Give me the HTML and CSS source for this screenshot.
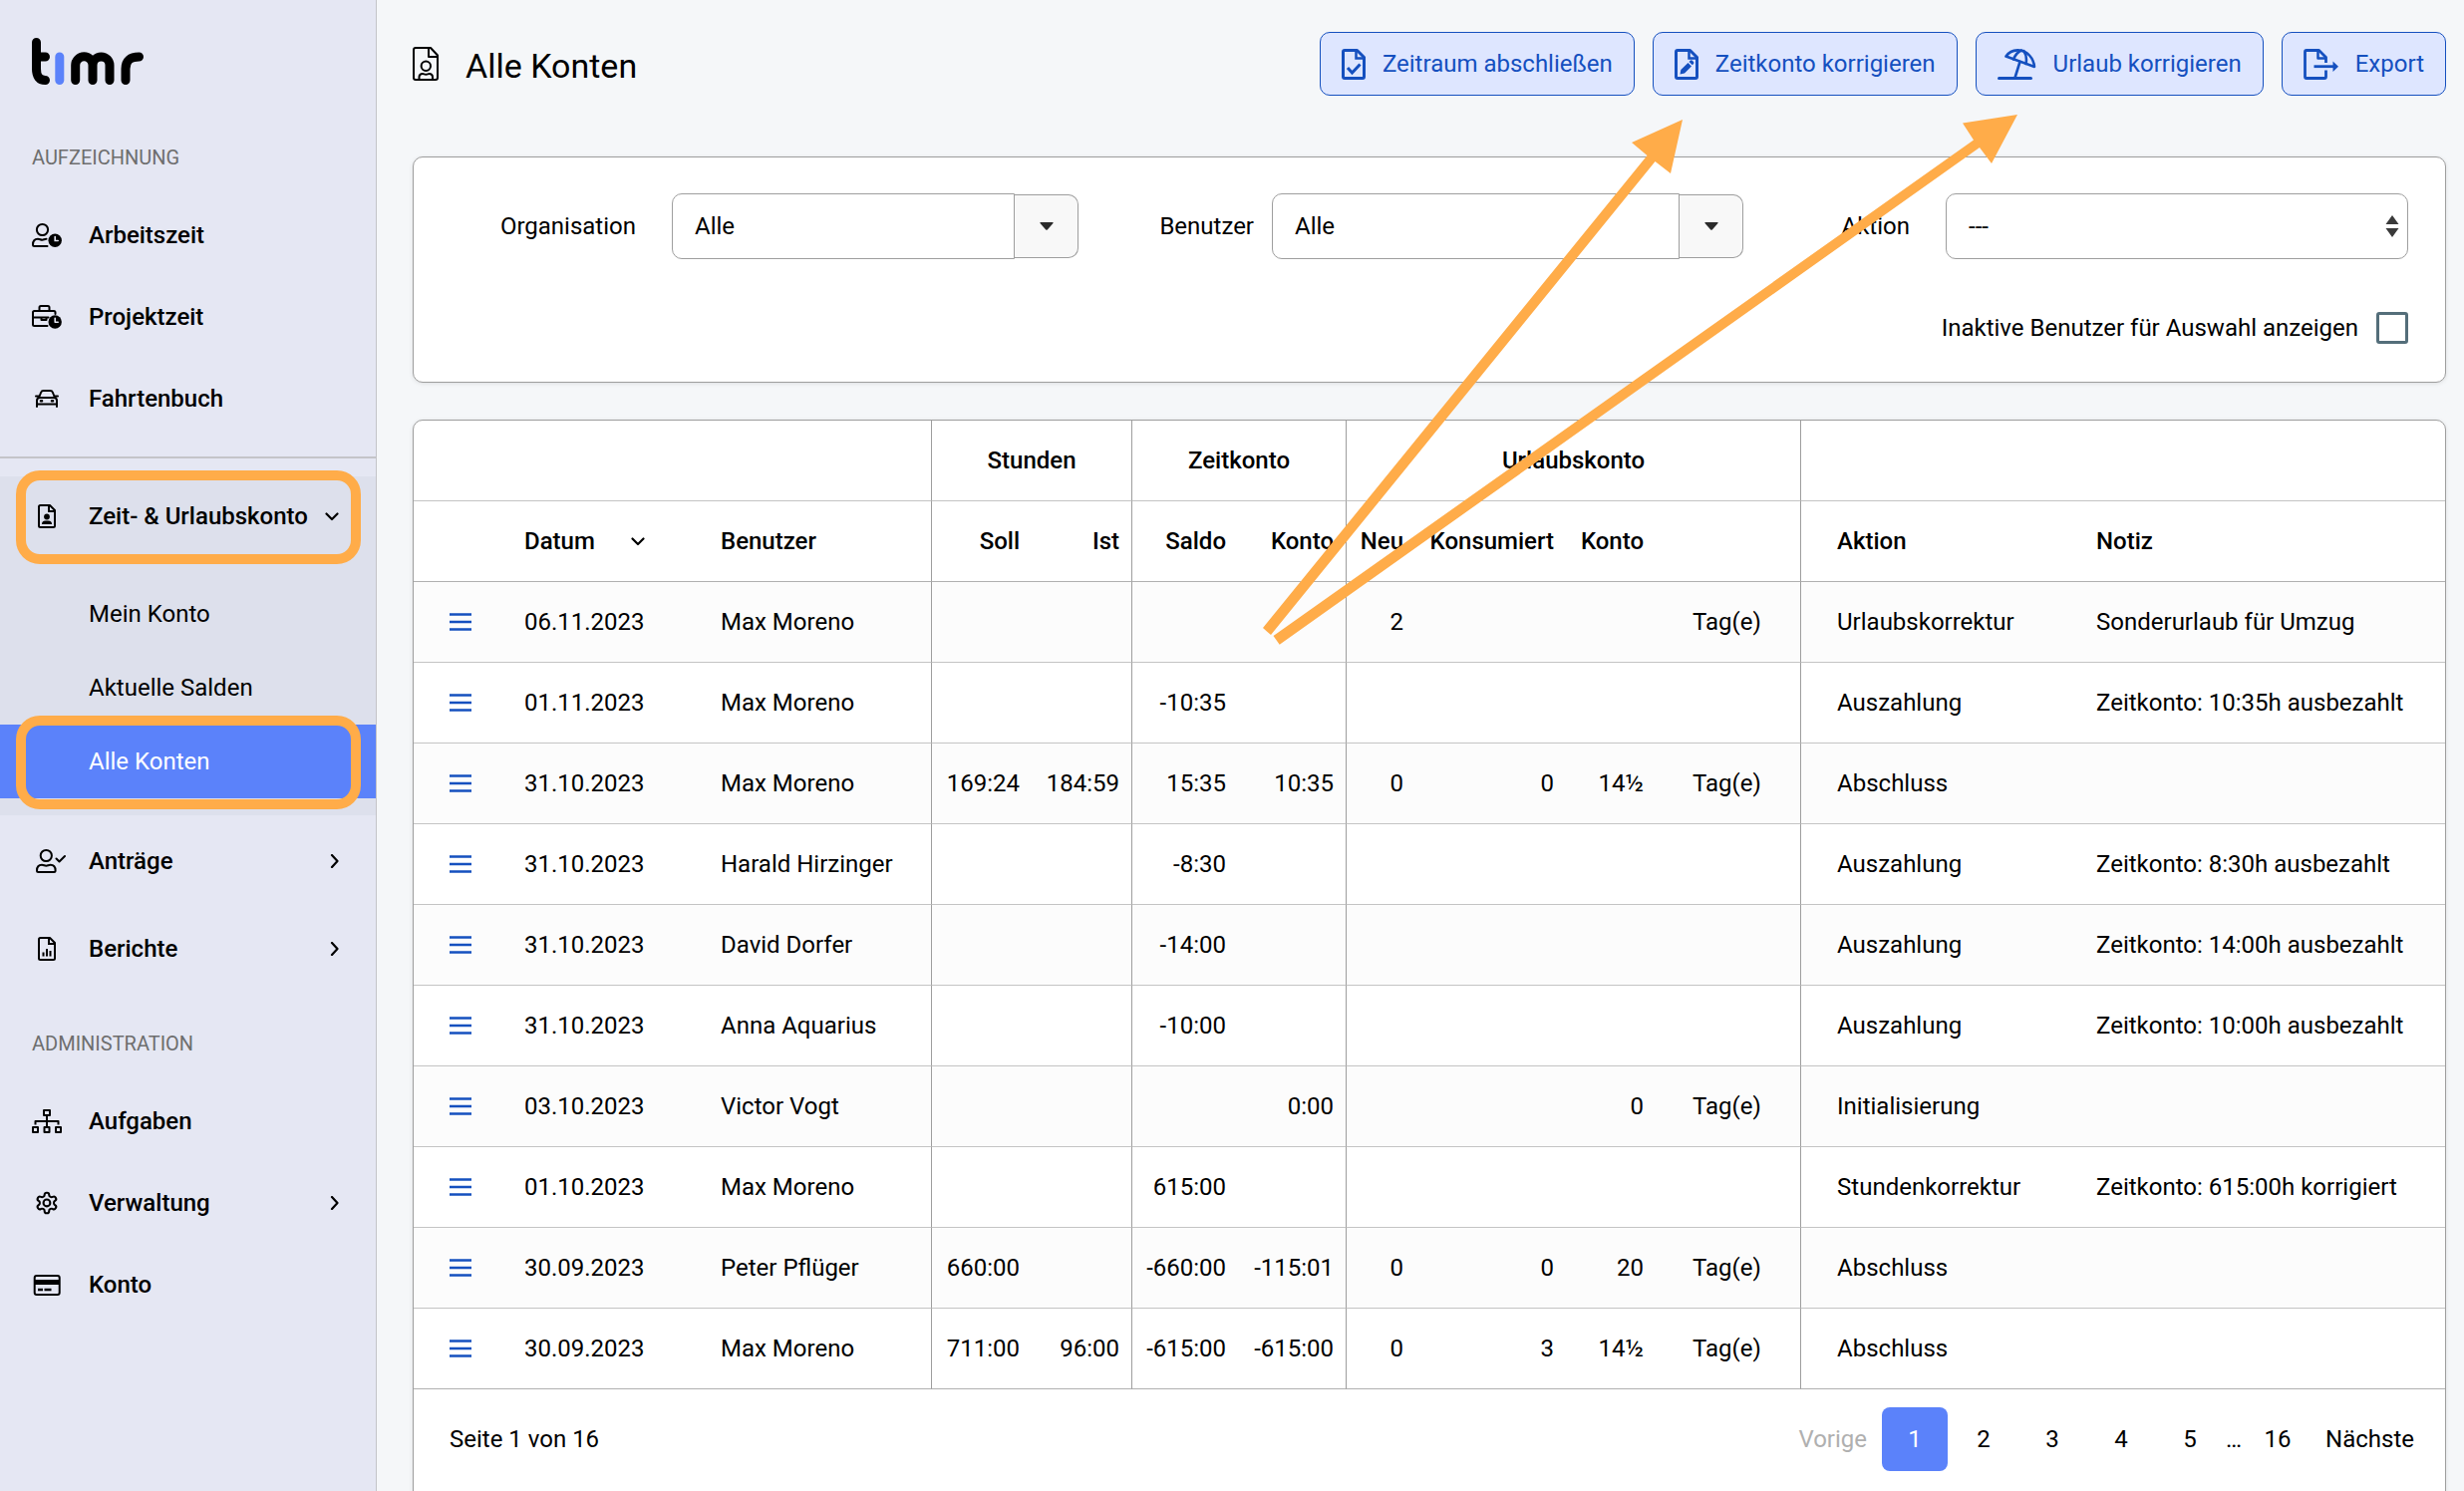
FILE: index.html
```
<!DOCTYPE html>
<html lang="de">
<head>
  <meta charset="UTF-8">
  <title>Alle Konten - timr</title>
  <meta name="viewport" content="width=device-width, initial-scale=1.0">
  <link rel="stylesheet" href="styles.css">
</head>
<body>

  <!-- shared icons -->
  <svg class="sprite" aria-hidden="true">
    <symbol id="i-menu" viewBox="0 0 22 20">
      <path d="M0 2.5h22M0 10h22M0 17.5h22" fill="none" stroke="currentColor" stroke-width="2.6"/>
    </symbol>
    <symbol id="i-down" viewBox="0 0 14 14">
      <path d="M1.5 4.5L7 10l5.500-5.500" fill="none" stroke="currentColor" stroke-width="2.2" stroke-linecap="round" stroke-linejoin="round"/>
    </symbol>
    <symbol id="i-right" viewBox="0 0 14 14">
      <path d="M7 1L12.500 7 7 13" fill="none" stroke="currentColor" stroke-width="2.2" stroke-linecap="round" stroke-linejoin="round"/>
    </symbol>
    <symbol id="i-caret" viewBox="0 0 14 8">
      <path d="M1 0h12q1.200 0 .5 1L8 7.300q-1 1-2 0L.500 1Q-.2 0 1 0z" fill="#2b2b2b"/>
    </symbol>
    <symbol id="i-doc" viewBox="0 0 24 31">
      <path d="M3 1.500h12.500L22.500 8.500V28q0 1.500-1.500 1.500H3Q1.500 29.500 1.500 28V3Q1.500 1.500 3 1.500z" fill="none" stroke="currentColor" stroke-width="3" stroke-linejoin="round"/>
      <path d="M14.500 2v7.500H22" fill="none" stroke="currentColor" stroke-width="2.500"/>
    </symbol>
    <symbol id="i-navdoc" viewBox="0 0 18 24">
      <path d="M2.500 1h9.500L17 6v15.500q0 1.500-1.500 1.500h-13Q1 23 1 21.500v-19Q1 1 2.500 1z" fill="none" stroke="currentColor" stroke-width="2" stroke-linejoin="round"/>
      <path d="M11 1.500V7h5.500" fill="none" stroke="currentColor" stroke-width="2"/>
    </symbol>
  </svg>

  <div class="app">
    <aside class="sidebar">
      <a class="logo" href="#" aria-label="timr">
        <svg width="112" height="47" viewBox="0 0 112 47" fill="none" stroke="#000" stroke-width="9" stroke-linecap="round">
          <path d="M4.500 4.500V31Q4.500 42.500 13.500 42.500M4.500 19h9"/>
          <path d="M27.800 19v23.500" stroke="#5b82fa"/>
          <path d="M43.700 42.500V27.500a8.650 8.650 0 0 1 17.300 0v15M61 27.500a8.500 8.500 0 0 1 17 0v15"/>
          <path d="M94 42.500V31Q94 19 107.500 19"/>
        </svg>
      </a>

      <h2 class="nav-label">Aufzeichnung</h2>
      <nav class="nav">
        <a class="nav-item" href="#">
          <svg class="nav-icon" viewBox="0 0 34 26" fill="none" stroke="currentColor" stroke-width="2" stroke-linecap="round">
            <circle cx="10.500" cy="7.500" r="5.600"/>
            <path d="M15.500 24H2.500Q1 24 1 22.500C1 19 3 16.800 6 16.800c2 0 2.500.9 4.500.9 1.500 0 2-.9 4-.9"/>
            <circle cx="23.200" cy="18.300" r="6.700" fill="currentColor" stroke="none"/>
            <path d="M23.200 14.500v4h3" stroke="#e5e7f3" stroke-width="1.600"/>
          </svg>
          Arbeitszeit
        </a>
        <a class="nav-item" href="#">
          <svg class="nav-icon" viewBox="0 0 34 26" fill="none" stroke="currentColor" stroke-width="2" stroke-linecap="round" stroke-linejoin="round">
            <path d="M7.500 7V3.500Q7.500 2 9 2h7q1.500 0 1.500 1.500V7"/>
            <path d="M15.500 22H2.500Q1 22 1 20.500v-12Q1 7 2.500 7h19.500Q23.500 7 23.500 8.500v1.500"/>
            <path d="M1 13.500h15.500M9.500 14v2h5v-2"/>
            <circle cx="23.200" cy="18" r="6.700" fill="currentColor" stroke="none"/>
            <path d="M23.200 14.200v4h3" stroke="#e5e7f3" stroke-width="1.600"/>
          </svg>
          Projektzeit
        </a>
        <a class="nav-item" href="#">
          <svg class="nav-icon" viewBox="0 0 34 26" fill="none" stroke="currentColor" stroke-width="2" stroke-linecap="round" stroke-linejoin="round">
            <path d="M7 12L9.200 6.500Q9.800 5 11.500 5h7q1.700 0 2.300 1.500L23 12"/>
            <path d="M5 21v-6q0-3 3-3h14q3 0 3 3v6M5 18.500h20M4 10.500h3M23 10.500h3"/>
            <path d="M9 15.300h1M20 15.300h1" stroke-width="2.600"/>
          </svg>
          Fahrtenbuch
        </a>
      </nav>

      <div class="nav-group">
        <div class="highlight">
          <a class="nav-item" href="#">
            <svg class="nav-icon" viewBox="0 0 34 26">
              <use href="#i-navdoc" x="6" y="1" width="18" height="24"/>
              <circle cx="15" cy="13.500" r="2.900"/>
              <path d="M10 21q0-3.500 3.300-3.500h3.400q3.300 0 3.300 3.500z"/>
            </svg>
            Zeit- &amp; Urlaubskonto
            <svg class="nav-arrow" width="14" height="14"><use href="#i-down"/></svg>
          </a>
        </div>
        <a class="nav-subitem" href="#">Mein Konto</a>
        <a class="nav-subitem" href="#">Aktuelle Salden</a>
        <a class="nav-subitem active highlight" href="#">Alle Konten</a>
      </div>

      <nav class="nav nav-wide">
        <a class="nav-item" href="#">
          <svg class="nav-icon" viewBox="0 0 34 26" fill="none" stroke="currentColor" stroke-width="2" stroke-linecap="round" stroke-linejoin="round">
            <circle cx="14.300" cy="7.500" r="5.600"/>
            <path d="M6.500 24Q5 24 5 22.500C5 19 7 16.800 10 16.800c2 0 2.500.9 4.300.9s2.300-.9 4.300-.9c3 0 5 2.200 5 5.700q0 1.500-1.500 1.500z"/>
            <path d="M24.500 10.500l3 3 5.500-5.500"/>
          </svg>
          Anträge
          <svg class="nav-arrow" width="14" height="14"><use href="#i-right"/></svg>
        </a>
        <a class="nav-item" href="#">
          <svg class="nav-icon" viewBox="0 0 34 26">
            <use href="#i-navdoc" x="6" y="1" width="18" height="24"/>
            <path d="M11.500 16.500v4M15 13v7.500M18.500 15v5.500" stroke="currentColor" stroke-width="2"/>
          </svg>
          Berichte
          <svg class="nav-arrow" width="14" height="14"><use href="#i-right"/></svg>
        </a>
      </nav>

      <h2 class="nav-label nav-label-admin">Administration</h2>
      <nav class="nav">
        <a class="nav-item" href="#">
          <svg class="nav-icon" viewBox="0 0 34 26" fill="none" stroke="currentColor" stroke-width="2" stroke-linejoin="round">
            <path d="M12 2h6v5h-6zM1 19h5v5H1zM12.500 19h5v5h-5zM24 19h5v5h-5z"/>
            <path d="M15 7v12M3.500 16.500V13h23v3.500"/>
          </svg>
          Aufgaben
        </a>
        <a class="nav-item" href="#">
          <svg class="nav-icon" viewBox="0 0 34 26" fill="none" stroke="currentColor" stroke-width="2">
            <g transform="translate(2.600 .6) scale(1.030)">
              <path d="M12.220 2h-.44a2 2 0 0 0-2 2v.18a2 2 0 0 1-1 1.730l-.43.25a2 2 0 0 1-2 0l-.15-.08a2 2 0 0 0-2.730.73l-.22.38a2 2 0 0 0 .73 2.730l.15.1a2 2 0 0 1 1 1.720v.51a2 2 0 0 1-1 1.740l-.15.09a2 2 0 0 0-.73 2.730l.22.38a2 2 0 0 0 2.730.73l.15-.08a2 2 0 0 1 2 0l.43.25a2 2 0 0 1 1 1.730V20a2 2 0 0 0 2 2h.44a2 2 0 0 0 2-2v-.18a2 2 0 0 1 1-1.730l.43-.25a2 2 0 0 1 2 0l.15.08a2 2 0 0 0 2.730-.73l.22-.39a2 2 0 0 0-.73-2.730l-.15-.08a2 2 0 0 1-1-1.740v-.5a2 2 0 0 1 1-1.740l.15-.09a2 2 0 0 0 .73-2.730l-.22-.38a2 2 0 0 0-2.730-.73l-.15.08a2 2 0 0 1-2 0l-.43-.25a2 2 0 0 1-1-1.730V4a2 2 0 0 0-2-2z"/>
              <circle cx="12" cy="12" r="3.300"/>
            </g>
          </svg>
          Verwaltung
          <svg class="nav-arrow" width="14" height="14"><use href="#i-right"/></svg>
        </a>
        <a class="nav-item" href="#">
          <svg class="nav-icon" viewBox="0 0 34 26" fill="none" stroke="currentColor" stroke-width="2">
            <rect x="2.700" y="4" width="25" height="19" rx="2"/>
            <path d="M2.700 10.500h25" stroke-width="5"/>
            <path d="M6 18h5M12.500 18h7" stroke-width="2.400"/>
          </svg>
          Konto
        </a>
      </nav>
    </aside>

    <main class="main">
      <header class="page-header">
        <svg class="page-icon" width="26" height="34" viewBox="0 0 26 34" fill="none" stroke="currentColor" stroke-width="2" stroke-linejoin="round">
          <path d="M3 1h15l7 7.500V31q0 2-2 2H3q-2 0-2-2V3q0-2 2-2z"/>
          <path d="M16 1v9h9"/>
          <circle cx="13.300" cy="19.300" r="4.700"/>
          <path d="M6.500 33v-2.500q0-3.500 3.500-3.500c1.500 0 1.500.7 3.300.7s1.800-.7 3.200-.7q3.500 0 3.500 3.500V33"/>
        </svg>
        <h1>Alle Konten</h1>
        <div class="actions">
          <button type="button" class="btn">
            <svg width="24" height="31" viewBox="0 0 24 31">
              <use href="#i-doc"/>
              <path d="M6 19l4.500 5L18.500 15.500" fill="none" stroke="currentColor" stroke-width="3"/>
            </svg>
            Zeitraum abschließen
          </button>
          <button type="button" class="btn">
            <svg width="24" height="31" viewBox="0 0 24 31">
              <use href="#i-doc"/>
              <path d="M5.500 25.500l.8-4.500 7.200-7 3.500 3.500-7 7zM14.500 13l1.300-1.300q1-.8 2 0l1.200 1.300q.9 1 0 2L17.800 16.300z" fill="currentColor"/>
            </svg>
            Zeitkonto korrigieren
          </button>
          <button type="button" class="btn">
            <svg width="39" height="31" viewBox="0 0 39 31" fill="none" stroke="currentColor" stroke-width="2.600" stroke-linejoin="round" stroke-linecap="round">
              <path d="M1.500 29.500h32" stroke-width="3"/>
              <path d="M8.500 7.500C14-.5 26-.5 32 6.500q4.500 5 5 11.500z"/>
              <path d="M16 10.500Q19 3.500 24 1.500M28.500 15Q30 7.500 26.500 2.200"/>
              <path d="M22.500 13L17.500 29"/>
            </svg>
            Urlaub korrigieren
          </button>
          <button type="button" class="btn">
            <svg width="35" height="31" viewBox="0 0 35 31" fill="none" stroke="currentColor" stroke-width="2.800" stroke-linejoin="round">
              <path d="M22.500 14V8.500l-7-7H3Q1.500 1.500 1.500 3v25q0 1.500 1.500 1.500h18q1.500 0 1.500-1.500v-6.500"/>
              <path d="M14.500 2v7.500H22" stroke-width="2.500"/>
              <path d="M10.500 17.700h20"/>
              <path d="M29.500 12.500l5.500 5.200-5.500 5.200z" fill="currentColor" stroke="none"/>
            </svg>
            Export
          </button>
        </div>
      </header>

      <form class="card filter">
        <div class="field">
          <label for="org">Organisation</label>
          <div class="combo combo-org">
            <input type="text" id="org" value="Alle">
            <button type="button" aria-label="Organisation wählen"><svg width="14" height="8"><use href="#i-caret"/></svg></button>
          </div>
        </div>
        <div class="field field-user">
          <label for="user">Benutzer</label>
          <div class="combo combo-user">
            <input type="text" id="user" value="Alle">
            <button type="button" aria-label="Benutzer wählen"><svg width="14" height="8"><use href="#i-caret"/></svg></button>
          </div>
        </div>
        <div class="field">
          <label for="action">Aktion</label>
          <div class="select">
            <select id="action">
              <option>---</option>
            </select>
            <svg width="14" height="22" viewBox="0 0 14 22"><path d="M7 0l6.500 9h-13zM7 22l6.500-9h-13z" fill="#3a3a3a"/></svg>
          </div>
        </div>
        <div class="field field-check">
          <label for="inactive">Inaktive Benutzer für Auswahl anzeigen</label>
          <input type="checkbox" id="inactive">
        </div>
      </form>

      <section class="card">
        <table class="accounts">
          <colgroup>
            <col class="c-menu"><col class="c-date"><col class="c-user">
            <col class="c-soll"><col class="c-ist">
            <col class="c-saldo"><col class="c-konto">
            <col class="c-neu"><col class="c-kons"><col class="c-rest"><col class="c-unit">
            <col class="c-action"><col>
          </colgroup>
          <thead>
            <tr>
              <th colspan="3" class="sep"></th>
              <th colspan="2" class="sep center">Stunden</th>
              <th colspan="2" class="sep center">Zeitkonto</th>
              <th colspan="4" class="sep center">Urlaubskonto</th>
              <th colspan="2"></th>
            </tr>
            <tr>
              <th></th>
              <th><span class="sort">Datum <svg width="14" height="14"><use href="#i-down"/></svg></span></th>
              <th class="sep">Benutzer</th>
              <th class="num">Soll</th>
              <th class="num sep">Ist</th>
              <th class="num">Saldo</th>
              <th class="num sep">Konto</th>
              <th class="num">Neu</th>
              <th class="num">Konsumiert</th>
              <th class="num">Konto</th>
              <th class="sep"></th>
              <th>Aktion</th>
              <th>Notiz</th>
            </tr>
          </thead>
          <tbody id="rows"></tbody>
        </table>
        <footer class="table-footer">
          <span>Seite 1 von 16</span>
          <nav class="pager">
            <a class="prev disabled">Vorige</a>
            <a class="page current" href="#">1</a>
            <a class="page" href="#">2</a>
            <a class="page" href="#">3</a>
            <a class="page" href="#">4</a>
            <a class="page" href="#">5</a>
            <span class="dots">…</span>
            <a class="page" href="#">16</a>
            <a class="next" href="#">Nächste</a>
          </nav>
        </footer>
      </section>
    </main>

    <!-- arrows to the two correction buttons -->
    <svg class="arrows" width="2472" height="660" viewBox="0 0 2472 660" aria-hidden="true">
      <path d="M1267 630L1652.500 156 1637 143 1688 120 1676 174 1660.500 162 1275 637z"/>
      <path d="M1277.500 638L1980 140.500 1969 123.500 2024 115 1998 164 1986 148 1283.700 646.700z"/>
    </svg>
  </div>

  <script>
    // datum, benutzer, soll, ist, saldo, konto, neu, konsumiert, konto, einheit, aktion, notiz
    const rows = [
      ['06.11.2023', 'Max Moreno', '', '', '', '', '2', '', '', 'Tag(e)', 'Urlaubskorrektur', 'Sonderurlaub für Umzug'],
      ['01.11.2023', 'Max Moreno', '', '', '-10:35', '', '', '', '', '', 'Auszahlung', 'Zeitkonto: 10:35h ausbezahlt'],
      ['31.10.2023', 'Max Moreno', '169:24', '184:59', '15:35', '10:35', '0', '0', '14½', 'Tag(e)', 'Abschluss', ''],
      ['31.10.2023', 'Harald Hirzinger', '', '', '-8:30', '', '', '', '', '', 'Auszahlung', 'Zeitkonto: 8:30h ausbezahlt'],
      ['31.10.2023', 'David Dorfer', '', '', '-14:00', '', '', '', '', '', 'Auszahlung', 'Zeitkonto: 14:00h ausbezahlt'],
      ['31.10.2023', 'Anna Aquarius', '', '', '-10:00', '', '', '', '', '', 'Auszahlung', 'Zeitkonto: 10:00h ausbezahlt'],
      ['03.10.2023', 'Victor Vogt', '', '', '', '0:00', '', '', '0', 'Tag(e)', 'Initialisierung', ''],
      ['01.10.2023', 'Max Moreno', '', '', '615:00', '', '', '', '', '', 'Stundenkorrektur', 'Zeitkonto: 615:00h korrigiert'],
      ['30.09.2023', 'Peter Pflüger', '660:00', '', '-660:00', '-115:01', '0', '0', '20', 'Tag(e)', 'Abschluss', ''],
      ['30.09.2023', 'Max Moreno', '711:00', '96:00', '-615:00', '-615:00', '0', '3', '14½', 'Tag(e)', 'Abschluss', '']
    ];
    const cls = ['', 'sep', 'num', 'num sep', 'num', 'num sep', 'num', 'num', 'num', 'sep', '', ''];

    document.getElementById('rows').innerHTML = rows.map(row =>
      '<tr><td><button type="button" class="row-menu" aria-label="Menü"><svg width="22" height="20"><use href="#i-menu"/></svg></button></td>' +
      row.map((value, i) => `<td class="${cls[i]}">${value}</td>`).join('') + '</tr>'
    ).join('');
  </script>

</body>
</html>
```

FILE: styles.css
```
*, *::after { box-sizing: border-box; }

body {
  margin: 0;
  background: #f5f7f9;
  color: #000;
  font-family: Roboto, "Liberation Sans", sans-serif;
  font-size: 24px;
  line-height: 28px;
}

a {
  color: inherit;
  text-decoration: none;
}

button, input, select {
  font: inherit;
  color: inherit;
}

svg { flex: none; }

.sprite {
  position: absolute;
  width: 0;
  height: 0;
}

.app {
  position: relative;
  display: flex;
  height: 100vh;
  overflow: hidden;
}

/* sidebar */

.sidebar {
  flex: none;
  width: 378px;
  background: #e5e7f3;
  border-right: 1px solid #c4c4c8;
}

.logo {
  display: block;
  padding: 38px 32px 0;
}

.logo svg { display: block; }

.nav-label {
  margin: 61px 32px 25px;
  font-size: 20px;
  font-weight: 400;
  line-height: 24px;
  text-transform: uppercase;
  color: #6e6e6e;
}

.nav-label-admin { margin-top: 39px; }

.nav-item {
  display: flex;
  align-items: center;
  height: 82px;
  padding: 0 37px 0 32px;
  font-weight: 500;
}

.nav-icon {
  width: 34px;
  height: 26px;
  margin-right: 23px;
}

.nav-arrow { margin-left: auto; }

.nav-wide { margin-top: 2px; }

.nav-wide .nav-item { height: 88px; }

.nav-group {
  margin-top: 17px;
  padding: 18px 0 17px;
  border-top: 2px solid #c4c4c8;
  background: linear-gradient(#e5e7f3 18px, #dde0ec 18px);
}

.nav-group .nav-item { height: 80px; }

.nav-group > .highlight:first-child { margin-bottom: 21px; }

.nav-subitem {
  display: flex;
  align-items: center;
  height: 74px;
  padding-left: 89px;
}

.nav-subitem.active {
  background: #5b82fa;
  color: #fff;
}

/* orange marker around a menu entry */
.highlight { position: relative; }

.highlight::after {
  content: '';
  position: absolute;
  top: 50%;
  left: 16px;
  right: 15px;
  height: 94px;
  margin-top: -46px;
  border: 10px solid #ffac49;
  border-radius: 24px;
  pointer-events: none;
}

/* content */

.main {
  flex: 1;
  min-width: 0;
  padding: 32px 18px 0 36px;
}

.page-header {
  display: flex;
  align-items: center;
  height: 64px;
  margin-bottom: 61px;
}

.page-icon { margin-right: 27px; }

h1 {
  margin: 0;
  padding-top: 3px;
  font-size: 34px;
  font-weight: 400;
  line-height: 42px;
}

.actions {
  display: flex;
  gap: 18px;
  margin-left: auto;
}

.btn {
  display: flex;
  align-items: center;
  gap: 17px;
  height: 64px;
  padding: 0 21px;
  border: 1px solid #1550bf;
  border-radius: 10px;
  background: #dee6ff;
  color: #1550bf;
  cursor: pointer;
}

.card {
  background: #fff;
  border: 1px solid #9e9e9e;
  border-radius: 10px;
  box-shadow: 0 1px 4px rgba(0, 0, 0, 0.1);
}

/* filter */

.filter {
  display: grid;
  grid-template-columns: repeat(3, 1fr);
  row-gap: 36px;
  margin-bottom: 37px;
  padding: 36px 37px 21px 0;
}

.field {
  display: flex;
  align-items: center;
  justify-content: flex-end;
  gap: 36px;
  height: 66px;
}

.field-user { gap: 18px; }

.field-check {
  grid-column: 1 / -1;
  gap: 18px;
}

.combo {
  display: flex;
  align-items: center;
}

.combo-org { width: 408px; }
.combo-user { width: 473px; }

.combo input {
  flex: 1;
  min-width: 0;
  height: 66px;
  padding: 0 22px;
  border: 1px solid #9e9e9e;
  border-radius: 10px 0 0 10px;
  background: #fff;
}

.combo button {
  display: flex;
  align-items: center;
  justify-content: center;
  width: 64px;
  height: 64px;
  padding: 0;
  border: 1px solid #9e9e9e;
  border-left: 0;
  border-radius: 0 10px 10px 0;
  background: #f8f8f8;
}

.select {
  position: relative;
  width: 464px;
}

.select select {
  display: block;
  width: 100%;
  height: 66px;
  padding: 0 22px;
  border: 1px solid #9e9e9e;
  border-radius: 10px;
  background: #fff;
  appearance: none;
}

.select svg {
  position: absolute;
  top: 22px;
  right: 9px;
  pointer-events: none;
}

.field-check input {
  width: 32px;
  height: 32px;
  margin: 0;
  border: 3px solid #546e7a;
  border-radius: 3px;
  background: #fff;
  appearance: none;
}

/* table */

.accounts {
  width: 100%;
  table-layout: fixed;
  border-collapse: separate;
  border-spacing: 0;
}

.c-menu { width: 75px; }
.c-date { width: 197px; }
.c-user { width: 248px; }
.c-soll { width: 101px; }
.c-ist { width: 100px; }
.c-saldo { width: 107px; }
.c-konto { width: 108px; }
.c-neu { width: 70px; }
.c-kons { width: 151px; }
.c-rest { width: 90px; }
.c-unit { width: 145px; }
.c-action { width: 260px; }

.accounts th,
.accounts td {
  height: 81px;
  padding: 0 0 0 36px;
  border-bottom: 1px solid #c4c4c4;
  text-align: left;
  white-space: nowrap;
}

.accounts th { font-weight: 500; }

.accounts .sep { border-right: 1px solid #9e9e9e; }

.accounts .center {
  padding: 0;
  text-align: center;
}

.accounts .num {
  padding: 0 13px 0 0;
  text-align: right;
}

.accounts .num.sep { padding-right: 12px; }

.accounts thead tr:last-child th,
.accounts tbody tr:last-child td {
  border-bottom-color: #b0b0b0;
}

.accounts tbody tr:nth-child(odd) { background: #fcfcfc; }

.sort {
  display: flex;
  align-items: center;
  gap: 36px;
}

.row-menu {
  display: block;
  padding: 0;
  border: 0;
  background: none;
  color: #1550bf;
}

.row-menu svg { display: block; }

.table-footer {
  display: flex;
  align-items: center;
  justify-content: space-between;
  padding: 18px 19px 36px 36px;
}

.pager {
  display: flex;
  align-items: center;
  gap: 3px;
}

.pager a {
  display: flex;
  align-items: center;
  justify-content: center;
  height: 64px;
  padding: 0 12px;
}

.pager .page { width: 66px; }

.pager .current {
  border-radius: 8px;
  background: #5b82fa;
  color: #fff;
}

.pager .disabled { color: #b0b0b0; }

.arrows {
  position: absolute;
  top: 0;
  left: 0;
  fill: #ffac49;
  pointer-events: none;
}
```
